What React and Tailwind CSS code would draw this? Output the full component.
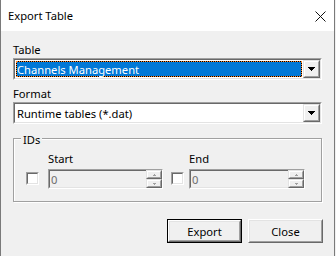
import React from "react";

const font = "font-['Noto_Sans',sans-serif] text-[11.2px] leading-[15px]";

function DropButton() {
  return (
    <div className="flex h-full w-[17px] shrink-0 border border-t-[#e3e3e3] border-l-[#e3e3e3] border-r-[#696969] border-b-[#696969]">
      <div className="flex flex-1 items-center justify-center border border-t-white border-l-white border-r-[#a0a0a0] border-b-[#a0a0a0] bg-[#f0f0f0]">
        <svg width="7" height="4" viewBox="0 0 7 4" shapeRendering="crispEdges">
          <path d="M0 0h7v1H0z M1 1h5v1H1z M2 2h3v1H2z M3 3h1v1H3z" fill="#000" />
        </svg>
      </div>
    </div>
  );
}

function ComboBox({ value, selected }) {
  return (
    <div className="flex h-[22px] w-[309px] border border-t-[#a0a0a0] border-l-[#a0a0a0] border-r-white border-b-white">
      <div className="flex min-w-0 flex-1 border border-t-[#696969] border-l-[#696969] border-r-[#e3e3e3] border-b-[#e3e3e3] bg-white">
        <div className="flex min-w-0 flex-1 p-px">
          {selected ? (
            <div className="flex flex-1 border border-dotted border-[#ff8728] bg-black">
              <div className="flex flex-1 items-center bg-[#0078d7] text-white">
                {value}
              </div>
            </div>
          ) : (
            <div className="flex flex-1 items-center pl-px text-black">{value}</div>
          )}
        </div>
        <DropButton />
      </div>
    </div>
  );
}

function SpinButton({ up }) {
  return (
    <div className="flex h-[9px] w-full border border-t-[#e3e3e3] border-l-[#e3e3e3] border-r-[#696969] border-b-[#696969]">
      <div className="flex flex-1 items-center justify-center border border-t-white border-l-white border-r-[#a0a0a0] border-b-[#a0a0a0] bg-[#f0f0f0]">
        <svg width="3" height="2" viewBox="0 0 3 2" shapeRendering="crispEdges">
          {up ? (
            <path d="M1 0h1v1H1z M0 1h3v1H0z" fill="#a0a0a0" />
          ) : (
            <path d="M0 0h3v1H0z M1 1h1v1H1z" fill="#a0a0a0" />
          )}
        </svg>
      </div>
    </div>
  );
}

function SpinEdit({ width }) {
  return (
    <div
      className={`flex h-[20px] border border-t-[#a0a0a0] border-l-[#a0a0a0] border-r-white border-b-white bg-[#f0f0f0] ${width}`}
    >
      <div className="flex flex-1 items-center border-t border-l border-b border-t-[#696969] border-l-[#696969] border-b-[#e3e3e3] pl-px text-[#6d6d6d]">
        0
      </div>
      <div className="flex w-[16px] flex-col">
        <SpinButton up />
        <SpinButton />
      </div>
    </div>
  );
}

function CheckBox() {
  return (
    <div className="mb-[4px] h-[13px] w-[13px] shrink-0 border border-t-[#a0a0a0] border-l-[#a0a0a0] border-r-white border-b-white">
      <div className="h-full w-full border border-t-[#696969] border-l-[#696969] border-r-[#e3e3e3] border-b-[#e3e3e3] bg-white" />
    </div>
  );
}

function Button({ label, isDefault }) {
  if (isDefault) {
    return (
      <div className="flex h-[24px] w-[75px] border border-black">
        <div className="flex flex-1 border border-t-white border-l-white border-r-[#696969] border-b-[#696969]">
          <div className="flex flex-1 items-center justify-center border border-t-[#e3e3e3] border-l-[#e3e3e3] border-r-[#a0a0a0] border-b-[#a0a0a0] bg-[#f0f0f0] text-black">
            {label}
          </div>
        </div>
      </div>
    );
  }
  return (
    <div className="flex h-[24px] w-[75px] border border-t-white border-l-white border-r-[#696969] border-b-[#696969]">
      <div className="flex flex-1 items-center justify-center border border-t-[#e3e3e3] border-l-[#e3e3e3] border-r-[#a0a0a0] border-b-[#a0a0a0] bg-[#f0f0f0] text-black">
        {label}
      </div>
    </div>
  );
}

export default function App() {
  return (
    <div className={`flex h-[256px] w-[336px] bg-[#f0f0f0] ${font}`}>
      <div className="flex h-full w-[335px] flex-col border-l border-r border-[#7a7a7a]">
        {/* title bar */}
        <div className="flex h-[31px] shrink-0 items-start justify-between bg-white pl-[7px] pr-[8px] pt-[8px]">
          <span className="text-black">Export Table</span>
          <svg width="11" height="11" viewBox="0 0 11 11" className="mt-[3px]">
            <path d="M0.5 0.5L10.5 10.5M10.5 0.5L0.5 10.5" stroke="#111" strokeWidth="1" />
          </svg>
        </div>

        {/* body */}
        <div className="flex flex-1 flex-col items-start bg-[#f0f0f0] pl-[12px] pt-[11px] text-black">
          <span>Table</span>
          <div className="mt-px">
            <ComboBox value="Channels Management" selected />
          </div>
          <span className="mt-[6px]">Format</span>
          <div className="mt-px">
            <ComboBox value="Runtime tables (*.dat)" />
          </div>

          <div className="relative mt-[14px] h-[64px] w-[309px] border border-[#a0a0a0] shadow-[inset_1px_1px_0_#fff,1px_1px_0_#fff]">
            <span className="absolute left-[7px] top-[-7px] bg-[#f0f0f0] px-[2px]">IDs</span>
            <div className="flex items-end pl-[12px] pt-[12px]">
              <CheckBox />
              <div className="ml-[9px] flex flex-col">
                <span className="mb-[3px]">Start</span>
                <SpinEdit width="w-[115px]" />
              </div>
              <div className="ml-[8px]">
                <CheckBox />
              </div>
              <div className="ml-[5px] flex flex-col">
                <span className="mb-[3px]">End</span>
                <SpinEdit width="w-[116px]" />
              </div>
            </div>
          </div>

          <div className="mt-[17px] flex w-[310px] justify-end gap-[6px]">
            <Button label="Export" isDefault />
            <Button label="Close" />
          </div>
        </div>
      </div>
    </div>
  );
}
